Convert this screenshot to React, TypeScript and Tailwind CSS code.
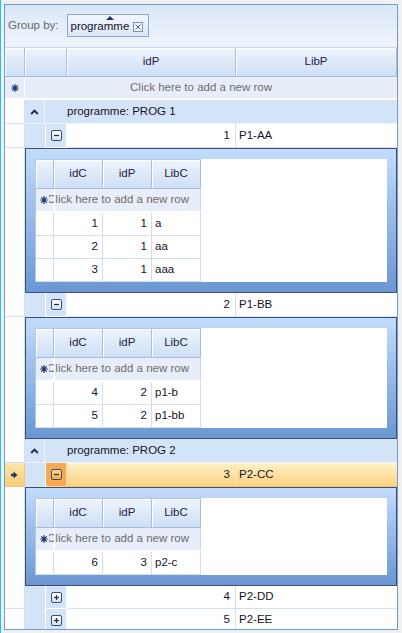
import React from 'react'

type Kid = [number, number, string]
interface ParentRow {
  id: number
  lib: string
  open?: boolean
  selected?: boolean
  kids?: Kid[]
}

const groups: { name: string; rows: ParentRow[] }[] = [
  {
    name: 'PROG 1',
    rows: [
      { id: 1, lib: 'P1-AA', open: true, kids: [[1, 1, 'a'], [2, 1, 'aa'], [3, 1, 'aaa']] },
      { id: 2, lib: 'P1-BB', open: true, kids: [[4, 2, 'p1-b'], [5, 2, 'p1-bb']] },
    ],
  },
  {
    name: 'PROG 2',
    rows: [
      { id: 3, lib: 'P2-CC', open: true, selected: true, kids: [[6, 3, 'p2-c']] },
      { id: 4, lib: 'P2-DD' },
      { id: 5, lib: 'P2-EE' },
    ],
  },
]

function Star() {
  return (
    <svg width="8" height="8" viewBox="0 0 8 8">
      <g stroke="#1f3a6d" strokeWidth="1.2" strokeLinecap="round">
        <path d="M4 0.6V7.4M0.6 4H7.4M1.6 1.6L6.4 6.4M6.4 1.6L1.6 6.4" />
      </g>
    </svg>
  )
}

function Caret() {
  return (
    <svg width="9" height="6" viewBox="0 0 9 6">
      <path d="M1.2 5L4.5 1.6L7.8 5" stroke="#1b2d5a" strokeWidth="2" fill="none" />
    </svg>
  )
}

function RowArrow() {
  return (
    <svg width="7" height="8" viewBox="0 0 7 8">
      <path d="M0 2.8H2.5V0.5L6.5 4L2.5 7.5V5.2H0Z" fill="#1d3462" />
    </svg>
  )
}

function ExpandBtn({ open, selected }: { open: boolean; selected?: boolean }) {
  const id = selected ? 'gsel' : 'gbtn'
  return (
    <svg width="11" height="11" viewBox="0 0 11 11">
      <defs>
        <linearGradient id={id} x1="0" y1="0" x2="0" y2="1">
          <stop offset="0" stopColor={selected ? '#ffd9a0' : '#ffffff'} />
          <stop offset="1" stopColor={selected ? '#f7a54a' : '#d3e1f4'} />
        </linearGradient>
      </defs>
      <rect x="0.5" y="0.5" width="10" height="10" rx="1.5" fill={`url(#${id})`} stroke="#3a4f72" />
      <path d="M3 5.5H8" stroke="#1f2f50" strokeWidth="1.2" />
      {!open && <path d="M5.5 3V8" stroke="#1f2f50" strokeWidth="1.2" />}
    </svg>
  )
}

function ChildGrid({ kids }: { kids: Kid[] }) {
  const head =
    'h-full flex items-center justify-center border-r border-[#a9bedc] bg-gradient-to-b from-[#eef4fd] to-[#cddff6] shadow-[inset_1px_1px_0_#ffffff] text-[#1e1b45]'
  return (
    <div className="w-[166px] border-l border-[#b3c8e6] bg-white">
      <div className="flex h-[30px] border-b border-[#a9bedc] border-t border-t-[#b3c8e6]">
        <div className={`w-[18px] ${head}`} />
        <div className={`w-[49px] ${head}`}>idC</div>
        <div className={`w-[49px] ${head}`}>idP</div>
        <div className={`w-[49px] ${head}`}>LibC</div>
      </div>
      <div className="relative flex h-[24px] bg-[#e7eef9] border-b-2 border-[#ffffff] border-r border-r-[#c6d7ee]">
        <div className="w-[18px] border-r border-white" />
        <div className="absolute inset-0 flex items-center justify-center text-[#6c6c6c]">Click here to add a new row</div>
        <div className="absolute left-[4px] top-[7px] bg-[#e7eef9] pr-[1px]">
          <Star />
        </div>
        <div className="absolute left-[18px] top-0 bottom-0 w-px bg-white" />
      </div>
      {kids.map(([a, b, c]) => (
        <div key={a} className="flex h-[23px] border-b border-[#cfdef2] text-[#141428]">
          <div className="w-[18px] border-r border-[#cfdef2]" />
          <div className="w-[49px] border-r border-[#cfdef2] flex items-center justify-end pr-[4px]">{a}</div>
          <div className="w-[49px] border-r border-[#cfdef2] flex items-center justify-end pr-[4px]">{b}</div>
          <div className="w-[49px] border-r border-[#cfdef2] flex items-center pl-[3px]">{c}</div>
        </div>
      ))}
    </div>
  )
}

function DataRow({ row, last }: { row: ParentRow; last?: boolean }) {
  const sel = !!row.selected
  return (
    <div className={`flex ${last ? 'h-[23px]' : 'h-[24px]'} shrink-0`}>
      <div
        className={`w-[20px] flex items-center justify-center border-r border-b ${
          sel ? 'bg-gradient-to-b from-[#fde6ad] to-[#f9cc72] border-[#f1c77a]' : 'bg-white border-[#d3e1f3]'
        }`}
      >
        {sel && <RowArrow />}
      </div>
      <div className="w-[21px] bg-[#d4e4f8] border-r border-white" />
      <div
        className={`w-[21px] flex items-center justify-center border-r border-b ${
          sel ? 'bg-[#f8aa50] border-[#fbd9a6]' : 'bg-[#d4e4f8] border-white'
        }`}
      >
        <ExpandBtn open={!!row.open} selected={sel} />
      </div>
      <div
        className={`flex-1 flex border-b ${
          sel
            ? 'bg-gradient-to-b from-[#fff1c6] to-[#fdd27f] border-[#f4c573] shadow-[inset_0_1px_0_#fff7dd]'
            : 'bg-white border-[#d3e1f3]'
        }`}
      >
        <div className={`w-[169px] flex items-center justify-end pr-[5px] border-r ${sel ? 'border-[#fbe4b0]' : 'border-[#d3e1f3]'}`}>
          {row.id}
        </div>
        <div className="flex-1 flex items-center pl-[3px]">{row.lib}</div>
      </div>
    </div>
  )
}

function Detail({ kids }: { kids: Kid[] }) {
  return (
    <div className="flex shrink-0">
      <div className="w-[20px] bg-white border-r border-[#d3e1f3]" />
      <div className="flex-1 border border-[#3d5176] bg-gradient-to-b from-[#c3dcfb] to-[#6b96d1] pt-[10px] pb-[10px] px-[9px]">
        <div className="bg-white flex">
          <ChildGrid kids={kids} />
        </div>
      </div>
    </div>
  )
}

function GroupRow({ name }: { name: string }) {
  return (
    <div className="flex h-[24px] shrink-0">
      <div className="w-[20px] bg-white border-r border-b border-[#d3e1f3]" />
      <div className="w-[20px] bg-[#d4e4f8] border-r border-b border-[#eef4fc] flex items-center justify-center">
        <Caret />
      </div>
      <div className="flex-1 bg-[#d4e4f8] border-b border-[#eef4fc] flex items-center pl-[22px] text-[#141428]">
        programme: {name}
      </div>
    </div>
  )
}

export default function App() {
  const head =
    'h-full flex items-center justify-center border-r border-[#abc0dd] bg-gradient-to-b from-[#eef4fd] to-[#cddff6] shadow-[inset_1px_1px_0_#ffffff] text-[#1e1b45]'
  return (
    <div className="w-[402px] h-[633px] bg-[#f0f0f0] border-l border-[#1fc2ef] overflow-hidden font-['Liberation_Sans',Arial,sans-serif] text-[11.5px] text-[#141428]">
      <div className="ml-[3px] mt-[4px] w-[394px] h-[626px] border border-[#6f9bd6] bg-white flex flex-col overflow-hidden">
        {/* group by panel */}
        <div className="h-[42px] shrink-0 flex items-center bg-gradient-to-b from-[#dbe6f7] to-[#f0f5fc] pl-[3px]">
          <span className="text-[#676767]">Group by:</span>
          <div className="relative ml-[8px] mb-[1px] h-[23px] w-[82px] border border-[#8ea7cc] bg-gradient-to-b from-[#f2f6fd] to-[#dce7f7] flex items-center pl-[3px] text-[#141428]">
            <div className="absolute left-[38px] top-[1px]">
              <svg width="8" height="4" viewBox="0 0 8 4">
                <path d="M0 4L4 0L8 4Z" fill="#1d3566" />
              </svg>
            </div>
            <span className="mt-[2px]">programme</span>
            <svg className="ml-[4px] mt-[2px]" width="10" height="10" viewBox="0 0 10 10">
              <rect x="0.5" y="0.5" width="9" height="9" fill="#f4f7fc" stroke="#7a90b4" />
              <path d="M2.5 2.5L7.5 7.5M7.5 2.5L2.5 7.5" stroke="#4d6185" strokeWidth="1" />
            </svg>
          </div>
        </div>
        {/* header */}
        <div className="flex h-[30px] shrink-0 border-t border-[#c9d8ee] border-b border-b-[#a6bcdc]">
          <div className={`w-[20px] ${head}`} />
          <div className={`w-[42px] ${head}`} />
          <div className={`w-[169px] ${head}`}>idP</div>
          <div className={`flex-1 ${head}`}>LibP</div>
        </div>
        {/* new row */}
        <div className="relative flex h-[23px] shrink-0 bg-[#e8eef9] border-b-2 border-white">
          <div className="w-[20px] border-r border-white flex items-center justify-center">
            <Star />
          </div>
          <div className="absolute inset-0 flex items-center justify-center text-[#6c6c6c] pointer-events-none">
            Click here to add a new row
          </div>
        </div>
        {groups.map((g) => (
          <React.Fragment key={g.name}>
            <GroupRow name={g.name} />
            {g.rows.map((r) => (
              <React.Fragment key={r.id}>
                <DataRow row={r} last={!r.open && r.id >= 4} />
                {r.open && r.kids && <Detail kids={r.kids} />}
              </React.Fragment>
            ))}
          </React.Fragment>
        ))}
        <div className="flex-1 flex">
          <div className="w-[20px] bg-white" />
          <div className="w-[21px] bg-[#d4e4f8]" />
        </div>
      </div>
    </div>
  )
}
